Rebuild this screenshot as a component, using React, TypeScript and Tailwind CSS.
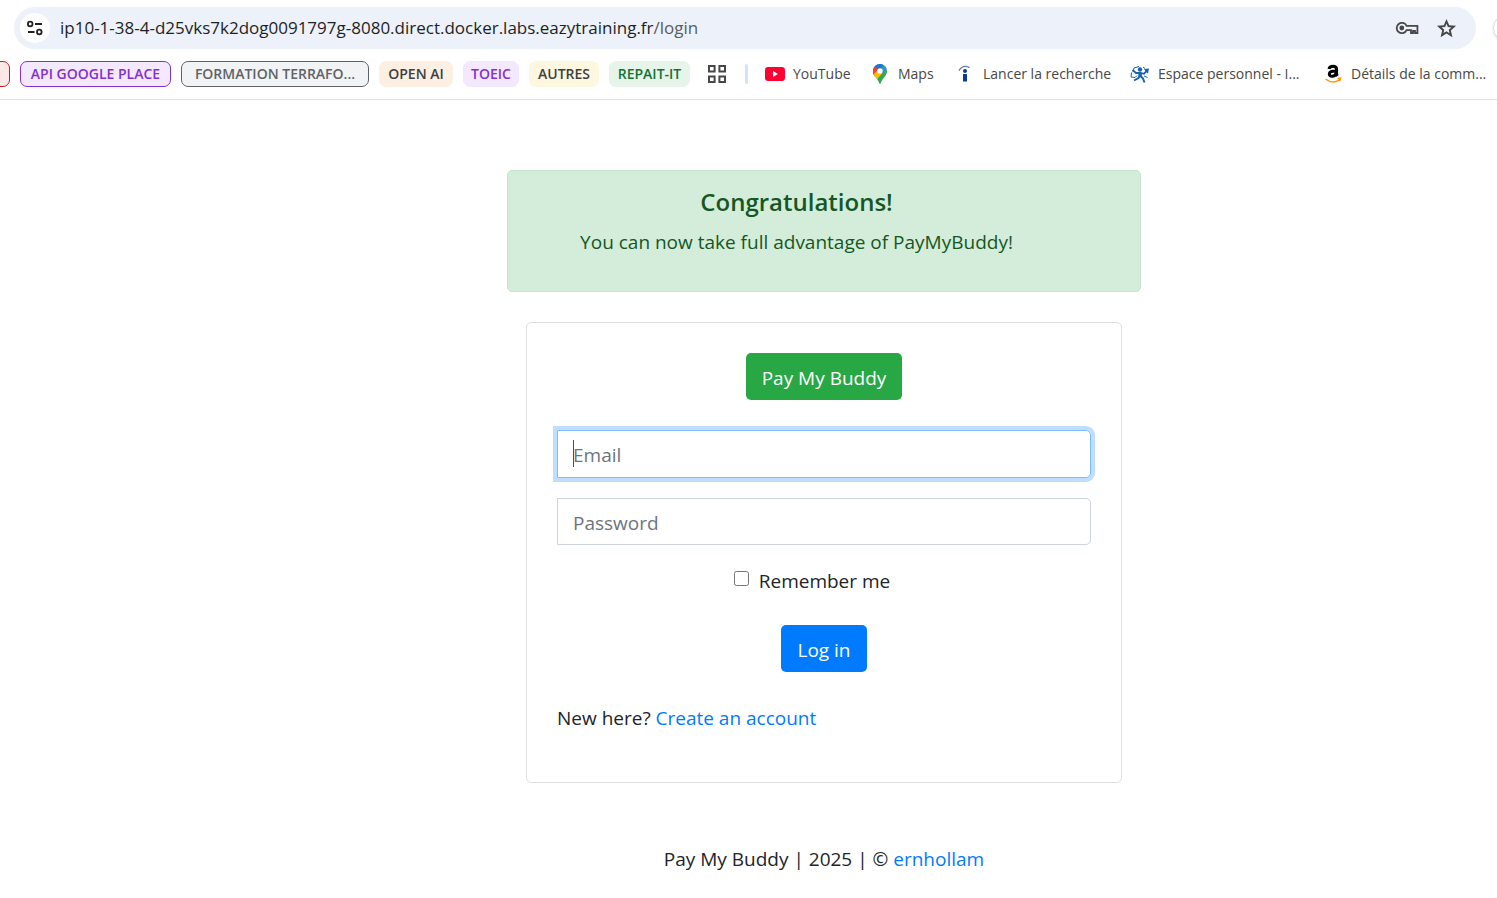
import type { ReactNode } from "react";

type Chip = { label: string; style: string };

const chips: Chip[] = [
  { label: "API GOOGLE PLACE", style: "w-[151px] border-[#8430ce] bg-[#f3e8fd] text-[#8430ce]" },
  { label: "FORMATION TERRAFO...", style: "w-[188px] border-[#5f6368] bg-[#f1f3f4] text-[#5f6368]" },
  { label: "OPEN AI", style: "w-[74px] border-[#feefe3] bg-[#feefe3] text-[#3c4043]" },
  { label: "TOEIC", style: "w-[56px] border-[#f3e8fd] bg-[#f3e8fd] text-[#8430ce]" },
  { label: "AUTRES", style: "w-[70px] border-[#fef7e0] bg-[#fef7e0] text-[#3c4043]" },
  { label: "REPAIT-IT", style: "w-[81px] border-[#e6f4ea] bg-[#e6f4ea] text-[#137333]" },
];

function TuneIcon() {
  return (
    <svg viewBox="0 0 18 18" className="size-[18px]" fill="none" stroke="#1f1f1f" strokeWidth="1.8">
      <circle cx="4.2" cy="5" r="2.3" />
      <path d="M9 5h7M2 13h6.5" />
      <circle cx="13.3" cy="13" r="2.3" />
    </svg>
  );
}

function KeyIcon() {
  return (
    <svg viewBox="0 0 24 14" className="h-[14px] w-[24px]" fill="none" stroke="#474747" strokeWidth="1.8">
      <path d="M11.6 4.8A5.2 5.2 0 1 0 11.6 9.2H16V12H18V9.8H20V12H22.4V4.8Z" />
      <circle cx="6.8" cy="7" r="2.4" fill="#474747" stroke="none" />
    </svg>
  );
}

function StarIcon() {
  return (
    <svg viewBox="0 0 24 24" className="size-[23px]" fill="#474747">
      <path d="m8.85 16.825 3.15-1.9 3.15 1.925-.825-3.6 2.775-2.4-3.65-.325-1.45-3.4-1.45 3.375-3.65.325 2.775 2.425ZM5.825 21l1.625-7.025L2 9.25l7.2-.625L12 2l2.8 6.625 7.2.625-5.45 4.725L18.175 21 12 17.275Z" />
    </svg>
  );
}

function GridIcon() {
  return (
    <svg viewBox="0 0 18 18" className="size-[18px]" fill="none" stroke="#474747" strokeWidth="2">
      <path d="M1 1h5.6v5.6H1zM11.4 1H17v5.6h-5.6zM1 11.4h5.6V17H1zM11.4 11.4H17V17h-5.6z" />
    </svg>
  );
}

function YouTubeIcon() {
  return (
    <svg viewBox="0 0 20 14" className="h-[14px] w-[20px]">
      <rect width="20" height="14" rx="3.2" fill="#ff0033" />
      <path d="M8 4.1v5.8L13 7z" fill="#fff" />
    </svg>
  );
}

function MapsIcon() {
  return (
    <svg viewBox="0 0 14 20" className="h-[20px] w-[14px]">
      <defs>
        <clipPath id="pin">
          <path d="M7 0a7 7 0 0 0-7 7c0 2.300.8 3.900 2 5.400C4.200 15 5.700 17 6.300 19.300c.2.900 1.200.9 1.400 0C8.300 17 9.800 15 12 12.400c1.200-1.500 2-3.100 2-5.400a7 7 0 0 0-7-7Z" />
        </clipPath>
      </defs>
      <g clipPath="url(#pin)">
        <rect width="14" height="20" fill="#34a853" />
        <path d="M0 13 14-3V-4H0z" fill="#1a73e8" />
        <path d="M7 7 1.500 2.200-1 5v8z" fill="#ea4335" />
        <path d="M0 11.200 4.500 6l4.900 3L3 16.500z" fill="#fbbc04" />
        <path d="M7 7 14 0v4L9.500 9z" fill="#4285f4" />
      </g>
      <circle cx="7" cy="7" r="2.700" fill="#fff" />
    </svg>
  );
}

function InfoIcon() {
  return (
    <svg viewBox="0 0 14 18" className="h-[18px] w-[14px]">
      <path d="M1 5.600C3.500 1.400 7.500.6 11.500 2.600" fill="none" stroke="#5f7fb5" strokeWidth="1.300" />
      <circle cx="7" cy="6" r="2" fill="#0b3a94" />
      <path d="M5 9h4v7.500H5z" fill="#0b3a94" />
    </svg>
  );
}

function RunnerIcon() {
  return (
    <svg viewBox="0 0 20 18" className="h-[18px] w-[20px]" fill="none" stroke="#1763ab">
      <path d="M3 6.500 4 3l5-1.500M13 2l2 1.500M1.500 7.500 1 12l4 .5 2-2M14 11l3.500 1.500" strokeWidth="1" />
      <path d="m14 4 5-.5-1 5-2-1.500z" fill="#1763ab" stroke="none" />
      <circle cx="10" cy="4.500" r="2.200" fill="#1763ab" stroke="none" />
      <path d="m2.500 5 3.500 3 4.500-.2 3.500 1 3.500-4" strokeWidth="1.800" />
      <path d="m8.500 8 3.500 0-.5 4-3-.5z" fill="#1763ab" stroke="none" />
      <path d="m10 10-1.500 3L4 15.500M10.500 11l2.500 2.500 1.500 4" strokeWidth="2" />
    </svg>
  );
}

function AmazonIcon() {
  return (
    <svg viewBox="0 0 18 20" className="h-[20px] w-[18px]" fill="none">
      <path d="M5 5C5.400 2.800 7 2.200 9 2.200c2.500 0 3.600 1.200 3.600 3.500v4.200c0 1 .5 1.400 1 2M12.200 7C7.500 6.800 5.300 7.900 5.300 10c0 3 5.400 3.200 6.900-.8" stroke="#000" strokeWidth="3" />
      <path d="M1.500 15c4.500 3.500 10 3.500 14 .8M13.500 14.500l3-.3-.8 2.800" stroke="#ff9900" strokeWidth="1.500" />
    </svg>
  );
}

function Bookmark({ icon, label, width }: { icon: ReactNode; label: string; width: string }) {
  return (
    <a href="#" className={`flex shrink-0 items-center gap-2 ${width}`}>
      <span className="flex w-5 shrink-0 justify-center">{icon}</span>
      <span className="whitespace-nowrap">{label}</span>
    </a>
  );
}

function BrowserBar() {
  return (
    <header className="overflow-hidden border-b border-[#dfe1e5] pt-[7px] font-['Open_Sans','Noto_Sans',sans-serif]">
      <div className="flex items-center">
        <div className="ml-3.5 mr-[17px] flex h-[42px] grow items-center rounded-full bg-[#ecf1fa] pl-1.5 pr-[18px]">
          <button aria-label="Site information" className="flex size-[30px] items-center justify-center rounded-full bg-white">
            <TuneIcon />
          </button>
          <p className="ml-2.5 grow text-[17px] leading-6 text-[#1f1f1f]">
            ip10-1-38-4-d25vks7k2dog0091797g-8080.direct.docker.labs.eazytraining.fr<span className="text-[#5a5d61]">/login</span>
          </p>
          <button aria-label="Passwords"><KeyIcon /></button>
          <button aria-label="Bookmark this page" className="ml-4"><StarIcon /></button>
        </div>
        <div className="-mr-6 size-7 shrink-0 rounded-full border border-[#dadce0] shadow" />
      </div>
      <nav aria-label="Bookmarks" className="flex h-[50px] items-center text-[14px] text-[#474747]">
        <div className="-ml-4 mr-2.5 h-[26px] w-[26px] shrink-0 rounded-[7px] border border-[#c5221f] bg-[#fce8e6]" />
        <div className="flex shrink-0 gap-2.5">
          {chips.map((chip) => (
            <button key={chip.label} className={`flex h-[26px] items-center justify-center whitespace-nowrap rounded-[7px] border font-semibold leading-6 ${chip.style}`}>
              {chip.label}
            </button>
          ))}
        </div>
        <button aria-label="All tabs" className="ml-[18px] shrink-0"><GridIcon /></button>
        <div className="ml-[19px] mr-[17px] h-5 w-[3px] shrink-0 rounded-full bg-[#d3e3fd]" />
        <Bookmark icon={<YouTubeIcon />} label="YouTube" width="w-[105px]" />
        <Bookmark icon={<MapsIcon />} label="Maps" width="w-[85px]" />
        <Bookmark icon={<InfoIcon />} label="Lancer la recherche" width="w-[175px]" />
        <Bookmark icon={<RunnerIcon />} label="Espace personnel - I..." width="w-[193px]" />
        <Bookmark icon={<AmazonIcon />} label="Détails de la comm..." width="w-[174px]" />
      </nav>
    </header>
  );
}

const inputStyle = "block w-full rounded-r-[5px] border px-[15px] pt-0.5 text-[19px] text-[#495057] outline-none placeholder:text-[#6c757d]";

export default function App() {
  return (
    <div className="min-h-screen bg-white font-['Open_Sans','Noto_Sans',sans-serif] text-[19px] leading-[30px] text-[#212529]">
      <BrowserBar />
      <main className="flex flex-col items-center pl-[151px] pt-[70px]">
        <div role="alert" className="w-full max-w-[634px] rounded-[5px] border border-[#c3e6cb] bg-[#d4edda] pb-[34px] pl-5 pr-[75px] pt-4 text-center text-[#155724]">
          <h1 className="mb-2.5 text-[24px] font-semibold">Congratulations!</h1>
          <p>You can now take full advantage of PayMyBuddy!</p>
        </div>
        <form className="mt-[30px] flex w-full max-w-[596px] flex-col items-center rounded-[5px] border border-[#dfdfdf] px-[30px] pb-[49px] pt-[30px]">
          <a href="#" className="flex h-[47px] items-center rounded-[5px] bg-[#28a745] px-4 pt-0.5 text-white">Pay My Buddy</a>
          <div className="relative mt-[30px] w-full">
            <input autoFocus type="email" aria-label="Email" placeholder="Email" className={`${inputStyle} h-12 border-[#80bdff] caret-transparent ring-4 ring-[#bfdeff]`} />
            <span aria-hidden="true" className="absolute left-4 top-2.5 h-[27px] w-px bg-[#495057]" />
          </div>
          <input type="password" aria-label="Password" placeholder="Password" className={`${inputStyle} mt-5 h-[47px] border-[#ced4da]`} />
          <label className="mr-6 mt-[21px] flex items-center gap-2.5">
            <input type="checkbox" className="mb-1.5 size-[15px]" />
            Remember me
          </label>
          <button type="submit" className="mt-[29px] h-[47px] rounded-[5px] bg-[#007bff] px-4 pt-0.5 text-white">Log in</button>
          <p className="mt-[31px] self-start">
            New here? <a href="#" className="text-[#007bff]">Create an account</a>
          </p>
        </form>
        <footer className="mt-[61px]">
          Pay My Buddy | 2025 | © <a href="#" className="text-[#007bff]">ernhollam</a>
        </footer>
      </main>
    </div>
  );
}
